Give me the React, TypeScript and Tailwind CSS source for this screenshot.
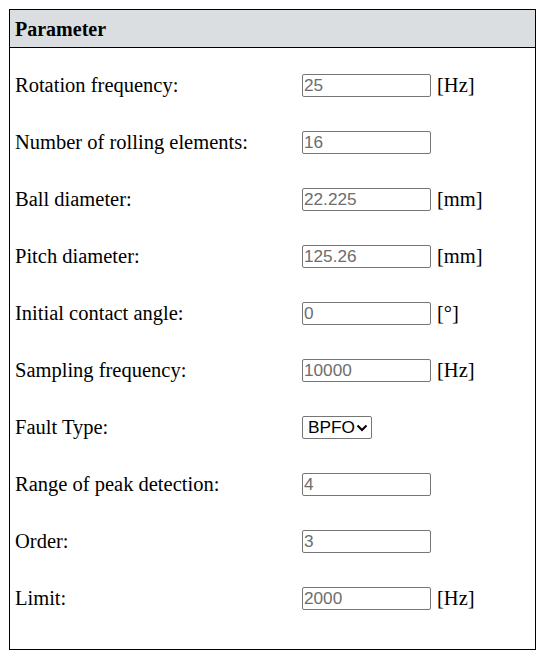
import React from "react";

const rows: { label: string; value?: string; unit?: string; select?: boolean }[] = [
  { label: "Rotation frequency:", value: "25", unit: "[Hz]" },
  { label: "Number of rolling elements:", value: "16" },
  { label: "Ball diameter:", value: "22.225", unit: "[mm]" },
  { label: "Pitch diameter:", value: "125.26", unit: "[mm]" },
  { label: "Initial contact angle:", value: "0", unit: "[°]" },
  { label: "Sampling frequency:", value: "10000", unit: "[Hz]" },
  { label: "Fault Type:", select: true },
  { label: "Range of peak detection:", value: "4" },
  { label: "Order:", value: "3" },
  { label: "Limit:", value: "2000", unit: "[Hz]" },
];

export default function App() {
  return (
    <div className="w-[544px] h-[657px] bg-white pt-[9px] pl-[9px]">
      <div className="w-[527px] h-[641px] border border-black flex flex-col">
        <div className="h-[38px] bg-[#dadee1] border-b border-black flex items-center pl-[5px] font-['Liberation_Serif',serif] font-bold text-[20px] text-black">
          Parameter
        </div>
        <div className="pt-[9px] flex flex-col">
          {rows.map((r) => (
            <div key={r.label} className="h-[57px] flex items-center">
              <div className="w-[292px] pl-[5px] font-['Liberation_Serif',serif] text-[20.5px] text-black leading-none">
                {r.label}
              </div>
              {r.select ? (
                <div className="h-[23px] w-[70px] border border-[#767676] rounded-[2px] flex items-center pl-[5px] font-['Liberation_Sans',Arial,sans-serif] text-[17.3px] text-black">
                  <span>BPFO</span>
                  <svg width="12" height="8" viewBox="0 0 12 8" className="ml-[1px]">
                    <path d="M1.5 1.5 L6 6 L10.5 1.5" fill="none" stroke="#000" strokeWidth="2" />
                  </svg>
                </div>
              ) : (
                <div className="h-[23px] w-[129px] border border-[#767676] rounded-[2px] flex items-center pl-[1px] font-['Liberation_Sans',Arial,sans-serif] text-[17.2px] text-[#6d6d6d]">
                  {r.value}
                </div>
              )}
              {r.unit && (
                <div className="ml-[6px] font-['Liberation_Serif',serif] text-[20.5px] text-black leading-none">
                  {r.unit}
                </div>
              )}
            </div>
          ))}
        </div>
      </div>
    </div>
  );
}
